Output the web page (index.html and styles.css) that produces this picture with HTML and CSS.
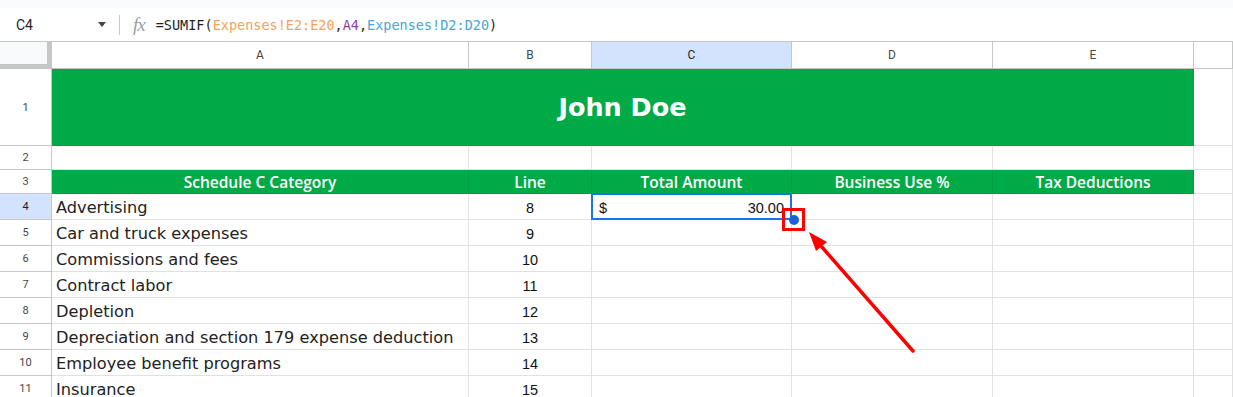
FILE: index.html
```html
<!DOCTYPE html>
<html lang="en">

<head>
    <meta charset="UTF-8">
    <meta name="viewport" content="width=device-width, initial-scale=1.0">
    <title>Schedule C - Sheet</title>
    <link rel="stylesheet" href="styles.css">
</head>

<body>
    <div class="top-strip"></div>

    <div class="formula-bar">
        <div class="name-box">
            <span>C4</span>
            <span class="caret"></span>
        </div>
        <div class="sep"></div>
        <div class="fx">fx</div>
        <div class="formula">=SUMIF(<span class="ref-1">Expenses!E2:E20</span>,<span class="ref-2">A4</span>,<span class="ref-3">Expenses!D2:D20</span>)</div>
    </div>

    <div class="sheet">
        <!-- column headers -->
        <div class="cell corner"></div>
        <div class="cell ch">A</div>
        <div class="cell ch">B</div>
        <div class="cell ch active">C</div>
        <div class="cell ch">D</div>
        <div class="cell ch">E</div>
        <div class="cell ch"></div>

        <!-- row 1 -->
        <div class="cell rh">1</div>
        <div class="cell title">John Doe</div>
        <div class="cell"></div>

        <!-- row 2 -->
        <div class="cell rh">2</div>
        <div class="cell"></div>
        <div class="cell"></div>
        <div class="cell"></div>
        <div class="cell"></div>
        <div class="cell"></div>
        <div class="cell"></div>

        <!-- row 3 -->
        <div class="cell rh">3</div>
        <div class="cell th">Schedule C Category</div>
        <div class="cell th">Line</div>
        <div class="cell th">Total Amount</div>
        <div class="cell th">Business Use %</div>
        <div class="cell th">Tax Deductions</div>
        <div class="cell"></div>

        <!-- row 4 -->
        <div class="cell rh active">4</div>
        <div class="cell txt">Advertising</div>
        <div class="cell num">8</div>
        <div class="cell money selected"><span>$</span><span>30.00</span></div>
        <div class="cell"></div>
        <div class="cell"></div>
        <div class="cell"></div>

        <div class="cell rh">5</div>
        <div class="cell txt">Car and truck expenses</div>
        <div class="cell num">9</div>
        <div class="cell"></div>
        <div class="cell"></div>
        <div class="cell"></div>
        <div class="cell"></div>

        <div class="cell rh">6</div>
        <div class="cell txt">Commissions and fees</div>
        <div class="cell num">10</div>
        <div class="cell"></div>
        <div class="cell"></div>
        <div class="cell"></div>
        <div class="cell"></div>

        <div class="cell rh">7</div>
        <div class="cell txt">Contract labor</div>
        <div class="cell num">11</div>
        <div class="cell"></div>
        <div class="cell"></div>
        <div class="cell"></div>
        <div class="cell"></div>

        <div class="cell rh">8</div>
        <div class="cell txt">Depletion</div>
        <div class="cell num">12</div>
        <div class="cell"></div>
        <div class="cell"></div>
        <div class="cell"></div>
        <div class="cell"></div>

        <div class="cell rh">9</div>
        <div class="cell txt">Depreciation and section 179 expense deduction</div>
        <div class="cell num">13</div>
        <div class="cell"></div>
        <div class="cell"></div>
        <div class="cell"></div>
        <div class="cell"></div>

        <div class="cell rh">10</div>
        <div class="cell txt">Employee benefit programs</div>
        <div class="cell num">14</div>
        <div class="cell"></div>
        <div class="cell"></div>
        <div class="cell"></div>
        <div class="cell"></div>

        <div class="cell rh">11</div>
        <div class="cell txt">Insurance</div>
        <div class="cell num">15</div>
        <div class="cell"></div>
        <div class="cell"></div>
        <div class="cell"></div>
        <div class="cell"></div>
    </div>

    <!-- annotation: fill handle + arrow -->
    <div class="fill-mark"><span class="handle"></span></div>
    <svg class="arrow" width="1233" height="397" viewBox="0 0 1233 397">
        <line x1="913" y1="351" x2="821" y2="246" stroke="#ff0000" stroke-width="3.5" stroke-linecap="round" />
        <polygon points="809,232 827,242 816,251" fill="#ff0000" />
    </svg>
</body>

</html>
```

FILE: styles.css
```css
html, body {
    margin: 0;
    height: 100%;
    overflow: hidden;
}

body {
    position: relative;
    background: #fff;
    font-family: Roboto, "Liberation Sans", sans-serif;
    color: #1f1f1f;
}

.top-strip {
    height: 8px;
    background: #f9fbfd;
}

/* formula bar */
.formula-bar {
    display: flex;
    align-items: center;
    height: 33px;
    border-bottom: 1px solid #c7c7c7;
}

.name-box {
    display: flex;
    align-items: center;
    justify-content: space-between;
    width: 90px;
    padding-left: 16px;
    font-size: 14px;
    color: #1f1f1f;
}

.caret {
    width: 0;
    height: 0;
    border-left: 4.5px solid transparent;
    border-right: 4.5px solid transparent;
    border-top: 5px solid #444746;
}

.sep {
    width: 1px;
    height: 20px;
    margin-left: 13px;
    background: #c7c7c7;
}

.fx {
    margin-left: 13px;
    font-family: "Liberation Serif", serif;
    font-style: italic;
    font-size: 19px;
    color: #9aa0a6;
    letter-spacing: -1px;
    line-height: 1;
}

.formula {
    margin-left: 11px;
    font-family: "DejaVu Sans Mono", monospace;
    font-size: 13.5px;
    color: #1f1f1f;
}

.ref-1 {
    color: #f4a15d;
}

.ref-2 {
    color: #8e3fae;
}

.ref-3 {
    color: #4ba6d3;
}

/* grid */
.sheet {
    display: grid;
    grid-template-columns: 52px 417px 123px 200px 201px 201px 1fr;
    grid-template-rows: 27px 77px 24px 24px repeat(8, 26px);
}

.cell {
    box-sizing: border-box;
    border-right: 1px solid #e1e1e1;
    border-bottom: 1px solid #e1e1e1;
    display: flex;
    align-items: center;
    min-width: 0;
    white-space: nowrap;
}

.corner {
    background: #f8f9fa;
    border-right: 5px solid #c4c7c5;
    border-bottom: 5px solid #c4c7c5;
}

.ch {
    justify-content: center;
    font-size: 12px;
    color: #444746;
    border-right-color: #c4c7c5;
    border-bottom-color: #c4c7c5;
}

.rh {
    justify-content: center;
    font-size: 11px;
    color: #444746;
    border-right-color: #c4c7c5;
    border-bottom-color: #c4c7c5;
}

.ch.active,
.rh.active {
    background: #d3e3fd;
    color: #1f1f1f;
}

.title {
    grid-column: span 5;
    justify-content: center;
    background: #00ab47;
    border-color: #00a043;
    color: #fff;
    font-family: "DejaVu Sans", sans-serif;
    font-weight: bold;
    font-size: 25.5px;
}

.th {
    justify-content: center;
    background: #00ab47;
    border-right-color: #039d43;
    border-bottom-color: #039d43;
    color: #fff;
    font-family: "Open Sans", sans-serif;
    font-weight: 600;
    font-size: 15.5px;
}

.txt {
    padding: 2px 0 0 4px;
    font-family: "DejaVu Sans", sans-serif;
    font-size: 16.2px;
    color: #222;
}

.num {
    justify-content: center;
    padding-top: 2px;
    font-family: "Liberation Sans", sans-serif;
    font-size: 14.5px;
    color: #111;
}

.money {
    justify-content: space-between;
    padding: 2px 7px 0 7px;
    font-family: "Liberation Sans", sans-serif;
    font-size: 14.5px;
    color: #111;
}

.selected {
    position: relative;
}

.selected::after {
    content: "";
    position: absolute;
    top: -1px;
    left: -1px;
    right: -1px;
    bottom: -1px;
    border: 2px solid #1a73e8;
}

/* overlays */
.fill-mark {
    position: absolute;
    left: 782px;
    top: 208px;
    width: 23px;
    height: 23px;
    box-sizing: border-box;
    border: 3.5px solid #ff0000;
    display: flex;
    align-items: center;
    justify-content: center;
}

.handle {
    width: 10px;
    height: 10px;
    border-radius: 50%;
    background: #1b62d6;
}

.arrow {
    position: absolute;
    left: 0;
    top: 0;
}
```
